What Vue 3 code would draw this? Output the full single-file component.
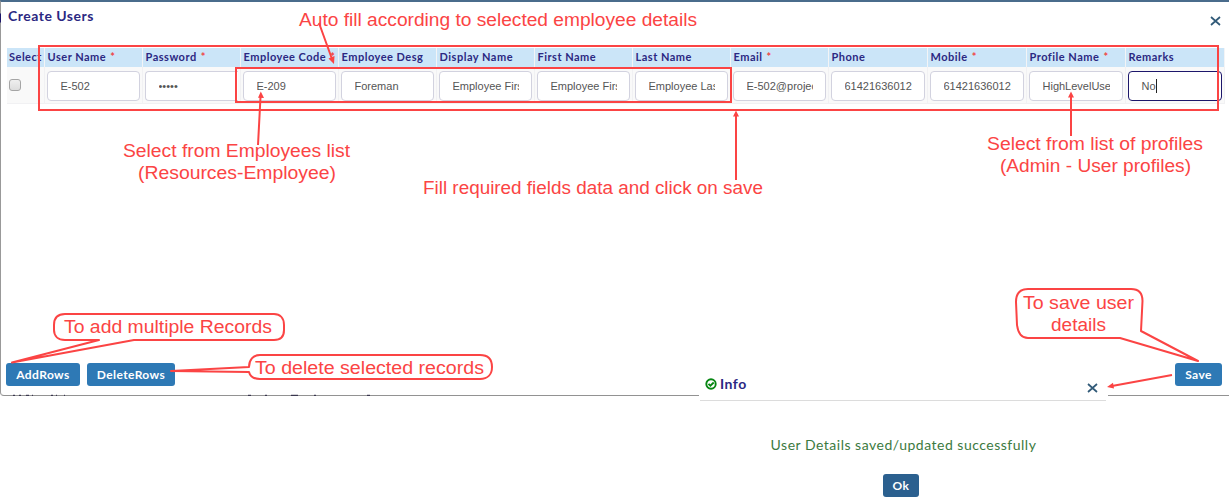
<script setup>
const columns = [
  { label: 'User Name', required: true, value: 'E-502' },
  { label: 'Password', required: true, value: '•••••', kind: 'password' },
  { label: 'Employee Code', required: true, value: 'E-209' },
  { label: 'Employee Desg', value: 'Foreman' },
  { label: 'Display Name', value: 'Employee First' },
  { label: 'First Name', value: 'Employee First' },
  { label: 'Last Name', value: 'Employee Last' },
  { label: 'Email', required: true, value: 'E-502@project' },
  { label: 'Phone', value: '61421636012' },
  { label: 'Mobile', required: true, value: '61421636012' },
  { label: 'Profile Name', required: true, value: 'HighLevelUse' },
  { label: 'Remarks', value: 'No', kind: 'focused' },
]
const notes = [
  { x: 299, y: 26, w: 398, text: 'Auto fill according to selected employee details' },
  { x: 123, y: 157, w: 227, text: 'Select from Employees list' },
  { x: 138, y: 179, w: 198, text: '(Resources-Employee)' },
  { x: 423, y: 194, w: 340, text: 'Fill required fields data and click on save' },
  { x: 987, y: 150, w: 216, text: 'Select from list of profiles' },
  { x: 1000, y: 172, w: 191, text: '(Admin - User profiles)' },
  { x: 64, y: 333, w: 208, text: 'To add multiple Records' },
  { x: 255, y: 374, w: 229, text: 'To delete selected records' },
  { x: 1023, y: 309, w: 111, text: 'To save user' },
  { x: 1051, y: 331, w: 55, text: 'details' },
]
</script>

<template>
  <main class="screen">
    <section class="dialog">
      <header class="dialog-head">
        <h1>Create Users</h1>
        <svg class="close" viewBox="0 0 10 10"><path d="M.5 1 9.5 9M9.5 1 .5 9" /></svg>
      </header>
      <div class="grid">
        <div class="th select">Select</div>
        <div v-for="c in columns" :key="c.label" class="th">
          {{ c.label }}<span v-if="c.required" class="req">*</span>
        </div>
        <div class="td check"><span class="box"></span></div>
        <div v-for="c in columns" :key="c.label + '-v'" class="td">
          <div class="field" :class="c.kind"><span class="value">{{ c.value }}</span></div>
        </div>
      </div>
      <footer class="actions">
        <button class="btn add">AddRows</button>
        <button class="btn del">DeleteRows</button>
        <button class="btn save">Save</button>
      </footer>
    </section>

    <section class="info">
      <header class="info-head">
        <svg class="tick" viewBox="0 0 12 12"><circle cx="6" cy="6" r="4.7" /><path d="M3.5 5.8 5.4 7.7 8.7 4.5" /></svg>
        <h2>Info</h2>
        <svg class="close" viewBox="0 0 10 10"><path d="M.5 1 9.5 9M9.5 1 .5 9" /></svg>
      </header>
      <p>User Details saved/updated successfully</p>
      <button class="btn ok">Ok</button>
    </section>

    <svg class="overlay" viewBox="0 0 1229 504">
      <path class="edge" d="M0 13.500h1v9h-1z" />
      <path class="specks" d="M13 395.300h2m4 0h2m5 0h3m3 0h1m18 0h2m3 0h1m7 0h1M248 395.300h3m14 0h2m24 0h7m16 0h2m51 0h3" />
      <g class="lines">
        <rect x="39" y="46" width="1179" height="64" />
        <rect x="236" y="68" width="495" height="34" />
        <path d="M319 23 332 59M258 145 260.500 97M736 180V115M1071 136V96M1172 375 1112 386" />
      </g>
      <g class="heads">
        <path d="M334 64 328.500 58.500 334.500 56zM260.800 91.500 264 98 258 97.800zM736 110.500 739 116.500H733zM1071 91.500 1074 97.500H1068zM1107 387 1113 382.800 1114 388.500z" />
      </g>
      <g class="bubbles">
        <path d="M134 340H274C281 340 284 336 284 330V325C284 318 280 314 274 314H65C58 314 54 318 54 325V330C54 336 58 340 65 340H99L12 362.500Z" />
        <path d="M249 367 171 371 249 372C250 376 254 379 260 379H480C488 379 492 374 492 367C492 359 488 355 480 355H260C253 355 249 360 249 367Z" />
        <path d="M1141 331 1198 361 1120 338H1028C1021 338 1018 333 1017 325L1016 302C1016 293 1020 289 1028 289H1131C1139 289 1142.500 293 1142.500 301Z" />
      </g>
      <g class="notes">
        <text v-for="n in notes" :key="n.text" :x="n.x" :y="n.y" :textLength="n.w" lengthAdjust="spacingAndGlyphs">{{ n.text }}</text>
      </g>
    </svg>
  </main>
</template>

<style>
body { margin: 0; background: #fff; }
</style>

<style scoped>
* { box-sizing: border-box; }
.screen { position: relative; width: 1229px; height: 504px; overflow: hidden; font-family: Lato, sans-serif; color: #2b2882; }
.dialog { display: flex; flex-direction: column; height: 396px; border-top: 2px solid #4a6c8c; border-left: 1px solid #999; border-bottom: 1px solid #929292; border-bottom-left-radius: 4px; }
.dialog-head { display: flex; align-items: flex-start; justify-content: space-between; height: 46px; padding: 5px 8px 0 7px; }
h1 { margin: 0; font-size: 14px; line-height: 18px; font-weight: 700; letter-spacing: .5px; }
.close { width: 11px; height: 10px; margin-top: 9px; fill: none; stroke: #315a78; stroke-width: 1.700; }
.grid { display: grid; grid-template-columns: 38px repeat(8, 98px) repeat(3, 99px) 99px; grid-template-rows: 19px 37px; margin-left: 6px; }
.th { overflow: hidden; padding-left: 2.500px; border-right: 1px solid #f3f4f6; background: #cbe5f8; font-size: 11px; line-height: 18px; font-weight: 700; letter-spacing: .5px; white-space: nowrap; }
.th.select { padding-left: 2px; }
.req { margin-left: 4px; color: #f04444; }
.td { padding: 4px 2px 2px 2px; border-right: 1px solid #f1f1f3; border-bottom: 1px solid #f1f1f3; background: #f9f9f9; }
.check { padding: 12px 0 0 2px; }
.box { display: block; width: 12px; height: 12px; border: 1px solid #a5a5a5; border-radius: 3px; background: linear-gradient(#efefef, #ddd); }
.field { height: 30px; padding: 0 12px 0 12.500px; border: 1px solid #d2d2df; border-radius: 4px; background: #fff; color: #555; font: 11px/28px "Liberation Sans", sans-serif; }
.field.focused { border-color: #1d176b; }
.field.focused .value { display: inline-block; overflow: visible; border-right: 1px solid #222; line-height: 14px; }
.value { display: block; overflow: hidden; white-space: nowrap; }
.password { border-right: 0; border-radius: 4px 0 0 4px; }
.actions { display: flex; margin: auto 7px 9px 5px; }
.btn { height: 23px; padding: 0; border: 0; border-radius: 3px; background: #2e79b5; color: #fff; font: 700 12px/23px Lato, sans-serif; letter-spacing: .4px; text-align: center; }
.add { width: 74px; }
.del { width: 88px; margin-left: 7px; }
.save { width: 47px; margin-left: auto; }
.info { position: absolute; left: 699px; top: 370px; width: 409px; height: 134px; background: #fff; }
.info-head { display: flex; height: 31px; margin: 0 2px 0 1px; padding: 5px 8px 0 5px; border-bottom: 1px solid #dcdcdc; }
.tick { width: 12px; height: 12px; margin-top: 3px; fill: none; stroke: #078713; stroke-width: 1.900; }
h2 { margin: 0 0 0 3px; font-size: 14px; line-height: 18px; font-weight: 700; letter-spacing: .5px; }
.info-head .close { margin: 8px 0 0 auto; }
.info p { margin: 35px 0 0; color: #3c7a41; font-size: 14px; line-height: 18px; letter-spacing: .5px; text-align: center; }
.ok { display: block; width: 36px; margin: 20px auto 0 184px; background: #2b608f; }
.overlay { position: absolute; inset: 0; width: 1229px; height: 504px; }
.edge { fill: #1d176b; }
.specks { stroke: #25213e; stroke-width: 1; }
.lines { fill: none; stroke: #fb4444; stroke-width: 2; }
.heads { fill: #fb4444; }
.bubbles { fill: #fff; stroke: #fb4444; stroke-width: 2; stroke-linejoin: round; }
.notes { fill: #fb4444; font-family: "Liberation Sans", sans-serif; font-size: 18.700px; }
</style>
